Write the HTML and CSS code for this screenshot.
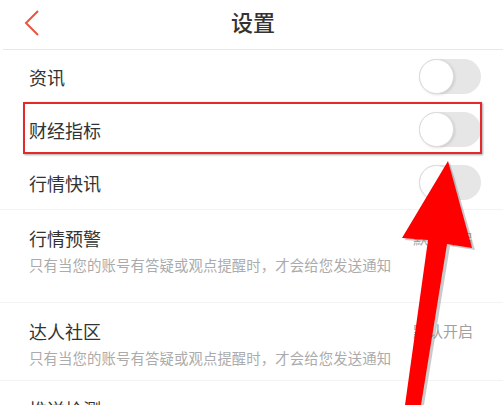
FILE: index.html
```html
<!DOCTYPE html>
<html lang="zh-CN">
<head>
    <meta charset="UTF-8">
    <meta name="viewport" content="width=device-width, initial-scale=1.0">
    <title>设置</title>
    <link rel="stylesheet" href="styles.css">
</head>
<body>
    <div class="page">
        <header class="topbar">
            <svg class="back" width="16" height="26" viewBox="0 0 16 26">
                <polyline points="14,1 2,13 14,25" fill="none" stroke="#e8563f" stroke-width="2"/>
            </svg>
            <h1>设置</h1>
        </header>

        <div class="list">
            <div class="row">
                <span class="label">资讯</span>
                <span class="switch"><span class="knob"></span></span>
            </div>
            <div class="row marked">
                <span class="label">财经指标</span>
                <span class="switch"><span class="knob"></span></span>
            </div>
            <div class="row line">
                <span class="label">行情快讯</span>
                <span class="switch"><span class="knob"></span></span>
            </div>
            <div class="row tall line">
                <div class="text">
                    <div class="label">行情预警</div>
                    <div class="desc">只有当您的账号有答疑或观点提醒时，才会给您发送通知</div>
                </div>
                <span class="value">默认开启</span>
            </div>
            <div class="row tall short line">
                <div class="text">
                    <div class="label">达人社区</div>
                    <div class="desc">只有当您的账号有答疑或观点提醒时，才会给您发送通知</div>
                </div>
                <span class="value">默认开启</span>
            </div>
            <div class="row last">
                <span class="label">推送检测</span>
                <span class="chev">&gt;</span>
            </div>
        </div>

        <!-- 标注箭头 -->
        <svg class="arrow" width="503" height="405" viewBox="0 0 503 405">
            <polygon points="450,163 475,250 450,246 424,405 408,405 430,242 405,240" fill="#8a8a8a" opacity="0.45"/>
            <polygon points="448,161 472,248 447,244 421,405 405,405 428,240 402,238" fill="#ff0000"/>
        </svg>
    </div>
</body>
</html>
```

FILE: styles.css
```css
body {
    margin: 0;
    padding: 0;
    background-color: #fff;
    color: #333;
    font-family: 'Noto Sans CJK SC', 'Noto Sans', sans-serif;
}
.page {
    position: relative;
    width: 503px;
    height: 405px;
    overflow: hidden;
}
.topbar {
    height: 49px;
    display: flex;
    align-items: center;
    justify-content: center;
    position: relative;
    border-bottom: 1px solid #e8e8e8;
    margin-left: 3px;
}
.back {
    position: absolute;
    left: 21px;
    top: 10px;
}
h1 {
    margin: 0;
    font-size: 22px;
    font-weight: 500;
    color: #333;
    line-height: 30px;
    margin-top: -7px;
}
.row {
    display: flex;
    align-items: center;
    justify-content: space-between;
    height: 53px;
    padding: 0 22px 0 29px;
    position: relative;
}
.row.line {
    border-bottom: 1px solid #f3f3f3;
}
.row.tall {
    height: auto;
    align-items: flex-start;
    padding-top: 16px;
    padding-bottom: 27px;
}
.row.short {
    padding-bottom: 12px;
}
.label {
    font-size: 18px;
    line-height: 24px;
    color: #333;
}
.desc {
    font-size: 14.4px;
    line-height: 20px;
    color: #ababab;
    margin-top: 5px;
    letter-spacing: 0.1px;
}
.value {
    font-size: 15px;
    line-height: 24px;
    color: #a0a0a0;
    margin-right: 8px;
}
.switch {
    width: 62px;
    height: 35px;
    border-radius: 18px;
    background-color: #e6e6e6;
    position: relative;
}
.knob {
    position: absolute;
    left: 0;
    top: 0;
    width: 33px;
    height: 33px;
    border-radius: 50%;
    background-color: #fff;
    border: 1px solid #dcdcdc;
    box-shadow: 1px 1px 3px rgba(0, 0, 0, 0.12);
}
.marked::after {
    content: '';
    position: absolute;
    left: 23px;
    right: 21px;
    top: -1px;
    bottom: 2px;
    border: 2px solid #e4282c;
    box-shadow: 1px 1px 2px rgba(0, 0, 0, 0.35);
}
.row.last {
    align-items: flex-start;
    padding-top: 16px;
}
.chev {
    color: #c8c8c8;
    font-size: 18px;
    margin-right: 20px;
}
.arrow {
    position: absolute;
    left: 0;
    top: 0;
}
```
